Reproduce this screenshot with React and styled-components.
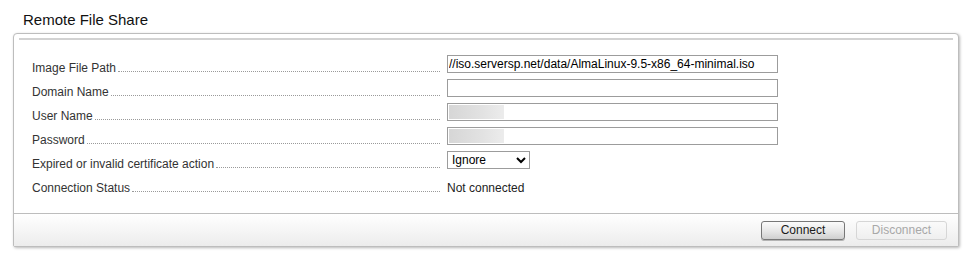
import React from "react";
import styled, { createGlobalStyle } from "styled-components";

const Global = createGlobalStyle`
  html, body { margin: 0; padding: 0; background: #fff; }
  body { font-family: "Liberation Sans", Arial, sans-serif; }
`;

const Page = styled.div`
  width: 980px;
  height: 262px;
  background: #fff;
`;

const Title = styled.h2`
  margin: 0;
  padding: 11px 0 0 23px;
  height: 22px;
  font-size: 15px;
  line-height: 17px;
  font-weight: normal;
  color: #111;
`;

const Panel = styled.section`
  margin: 0 21px 0 13px;
  border: 1px solid #bdbdbd;
  border-radius: 4px 4px 2px 2px;
  box-shadow: 1px 1px 3px rgba(0, 0, 0, 0.28);
  background: #fff;
`;

const TopRule = styled.div`
  margin: 4px 5px 0 5px;
  border-top: 2px solid #d2d2d2;
`;

const Body = styled.div`
  padding: 14px 0 15px 18px;
`;

const Row = styled.div`
  display: grid;
  grid-template-columns: 408px 1fr;
  column-gap: 7px;
  height: 24px;
  align-items: start;
`;

const Label = styled.div`
  display: flex;
  align-items: baseline;
  margin-top: 7px;
  font-size: 12px;
  line-height: 14px;
  color: #333;
  white-space: nowrap;
`;

const Leader = styled.span`
  flex: 1;
  margin-left: 2px;
  border-bottom: 1px dotted #9a9a9a;
`;

const TextInput = styled.input`
  box-sizing: border-box;
  width: 331px;
  height: 18px;
  margin: 1px 0 0 0;
  padding: 0 1px;
  border: 1px solid #9c9c9c;
  border-radius: 0;
  font-family: "Liberation Sans", Arial, sans-serif;
  font-size: 12px;
  color: #000;
  outline: none;
  background-color: #fff;
  background-image: ${(p) =>
    p.$redacted
      ? "linear-gradient(90deg, #d6d6d6 0%, #e2e2e2 60%, #ececec 100%)"
      : "none"};
  background-repeat: no-repeat;
  background-size: 55px 14px;
  background-position: 1px 1px;
`;

const Select = styled.select`
  box-sizing: border-box;
  width: 83px;
  height: 18px;
  margin: 0;
  padding: 0;
  border: 1px solid #9c9c9c;
  border-radius: 0;
  background: #fff;
  font-family: "Liberation Sans", Arial, sans-serif;
  font-size: 12px;
  color: #000;
`;

const Status = styled.div`
  margin-top: 7px;
  font-size: 12px;
  line-height: 14px;
  color: #222;
`;

const Footer = styled.div`
  display: flex;
  justify-content: flex-end;
  gap: 11px;
  padding: 7px 11px 5px 0;
  height: 20px;
  border-top: 1px solid #bdbdbd;
  background: linear-gradient(#ffffff, #ececec);
`;

const Button = styled.button`
  box-sizing: border-box;
  width: ${(p) => p.$w}px;
  height: 19px;
  padding: 0;
  border-radius: 3px;
  font-family: "Liberation Sans", Arial, sans-serif;
  font-size: 12px;
  line-height: 15px;
  border: 1px solid ${(p) => (p.disabled ? "#d6d6d6" : "#777")};
  color: ${(p) => (p.disabled ? "#a8a8a8" : "#1a1a1a")};
  background: ${(p) =>
    p.disabled
      ? "linear-gradient(#fafafa, #efefef)"
      : "linear-gradient(#fbfbfb, #e6e6e6 55%, #cfcfcf)"};
  box-shadow: ${(p) => (p.disabled ? "none" : "0 1px 0 rgba(0,0,0,0.25)")};
`;

function Field({ label, children }) {
  return (
    <Row>
      <Label>
        {label}
        <Leader />
      </Label>
      <div>{children}</div>
    </Row>
  );
}

export default function App() {
  return (
    <Page>
      <Global />
      <Title>Remote File Share</Title>
      <Panel>
        <TopRule />
        <Body>
          <Field label="Image File Path">
            <TextInput
              defaultValue="//iso.serversp.net/data/AlmaLinux-9.5-x86_64-minimal.iso"
            />
          </Field>
          <Field label="Domain Name">
            <TextInput defaultValue="" />
          </Field>
          <Field label="User Name">
            <TextInput $redacted defaultValue="" />
          </Field>
          <Field label="Password">
            <TextInput $redacted type="password" defaultValue="" />
          </Field>
          <Field label="Expired or invalid certificate action">
            <Select defaultValue="Ignore">
              <option>Ignore</option>
              <option>Reject</option>
            </Select>
          </Field>
          <Field label="Connection Status">
            <Status>Not connected</Status>
          </Field>
        </Body>
        <Footer>
          <Button $w={84}>Connect</Button>
          <Button $w={91} disabled>
            Disconnect
          </Button>
        </Footer>
      </Panel>
    </Page>
  );
}
